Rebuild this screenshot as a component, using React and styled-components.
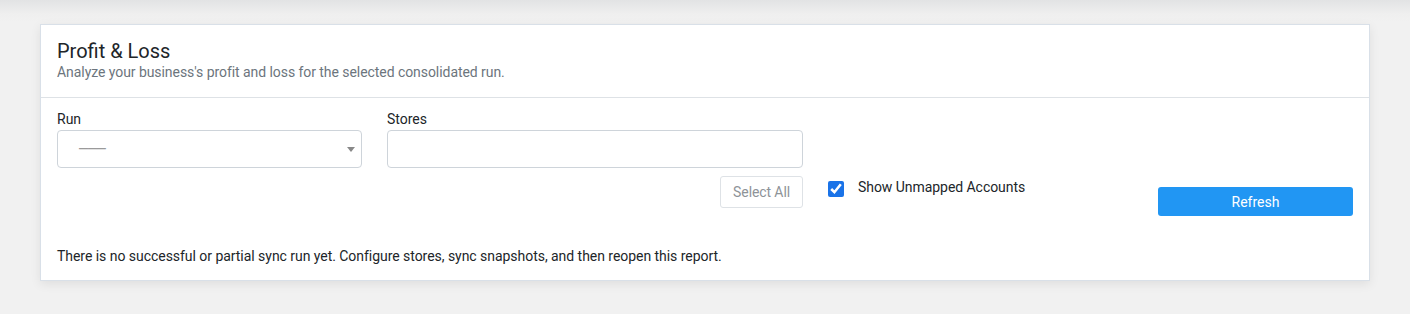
import React, { useState } from "react";
import styled, { createGlobalStyle } from "styled-components";

const COLOR = {
  PAGE: "#f1f1f1",
  TEXT: "#212529",
  MUTED: "#6c757d",
  BORDER: "#ced4da",
  LINE: "#dee2e6",
  BLUE: "#2196f3",
};

const GlobalStyle = createGlobalStyle`
  html, body {
    margin: 0;
    padding: 0;
  }
  body {
    font-family: Roboto, "Liberation Sans", Arial, sans-serif;
    color: ${COLOR.TEXT};
    background: linear-gradient(to bottom, #e2e3e4 0, #efefef 14px, ${COLOR.PAGE} 22px);
    min-height: 314px;
  }
`;

function App() {
  const [showUnmapped, setShowUnmapped] = useState(true);

  return (
    <>
      <GlobalStyle />
      <Page>
        <Card>
          <CardHeader>
            <Title>Profit &amp; Loss</Title>
            <Subtitle>
              Analyze your business's profit and loss for the selected
              consolidated run.
            </Subtitle>
          </CardHeader>
          <CardBody>
            <FilterRow>
              <Field $width={305}>
                <Label>Run</Label>
                <SelectBox>
                  <Placeholder>———</Placeholder>
                  <Caret />
                </SelectBox>
              </Field>
              <Field $width={416}>
                <Label>Stores</Label>
                <MultiInput />
                <Actions>
                  <GhostButton>Select All</GhostButton>
                </Actions>
              </Field>
              <CheckLabel>
                <CheckBox
                  type="checkbox"
                  checked={showUnmapped}
                  onChange={() => setShowUnmapped(!showUnmapped)}
                />
                Show Unmapped Accounts
              </CheckLabel>
              <Spacer />
              <PrimaryButton>Refresh</PrimaryButton>
            </FilterRow>
            <Message>
              There is no successful or partial sync run yet. Configure stores,
              sync snapshots, and then reopen this report.
            </Message>
          </CardBody>
        </Card>
      </Page>
    </>
  );
}

export default App;

const Page = styled.div`
  padding: 24px 40px 30px;
`;

const Card = styled.div`
  background: #fff;
  border: 1px solid #d9e0e8;
  box-shadow: 0 3px 10px rgba(0, 0, 0, 0.08);
`;

const CardHeader = styled.div`
  padding: 15px 16px 15px;
  border-bottom: 1px solid ${COLOR.LINE};
`;

const Title = styled.h1`
  margin: 0;
  font-size: 20px;
  font-weight: 400;
  line-height: 22px;
  color: ${COLOR.TEXT};
`;

const Subtitle = styled.p`
  margin: 0;
  font-size: 14px;
  line-height: 20px;
  letter-spacing: -0.06px;
  color: ${COLOR.MUTED};
`;

const CardBody = styled.div`
  padding: 12px 16px 14px;
`;

const FilterRow = styled.div`
  display: flex;
  align-items: flex-start;
`;

const Field = styled.div`
  width: ${(p) => p.$width}px;
  margin-right: 25px;
  display: flex;
  flex-direction: column;
`;

const Label = styled.label`
  font-size: 14px;
  line-height: 18px;
  margin-bottom: 2px;
  color: ${COLOR.TEXT};
`;

const SelectBox = styled.div`
  position: relative;
  height: 38px;
  box-sizing: border-box;
  border: 1px solid ${COLOR.BORDER};
  border-radius: 4px;
  display: flex;
  align-items: center;
  padding: 0 20px;
`;

const Placeholder = styled.span`
  font-size: 14px;
  color: #9a9a9a;
  letter-spacing: -2px;
`;

const Caret = styled.span`
  position: absolute;
  right: 6px;
  top: 16px;
  width: 0;
  height: 0;
  border-left: 4px solid transparent;
  border-right: 4px solid transparent;
  border-top: 5px solid #888;
`;

const MultiInput = styled.div`
  height: 38px;
  box-sizing: border-box;
  border: 1px solid ${COLOR.BORDER};
  border-radius: 4px;
`;

const Actions = styled.div`
  display: flex;
  justify-content: flex-end;
  margin-top: 8px;
`;

const GhostButton = styled.button`
  height: 32px;
  padding: 0 12px;
  background: #fff;
  border: 1px solid ${COLOR.LINE};
  border-radius: 3px;
  font-family: inherit;
  font-size: 14px;
  letter-spacing: -0.1px;
  color: #8e9398;
  cursor: pointer;
`;

const CheckLabel = styled.label`
  display: flex;
  align-items: center;
  margin-top: 67px;
  font-size: 14px;
  line-height: 20px;
  letter-spacing: -0.05px;
  color: ${COLOR.TEXT};
  cursor: pointer;
`;

const CheckBox = styled.input`
  width: 16px;
  height: 16px;
  margin: 3px 14px 0 0;
  accent-color: #1a73e8;
`;

const Spacer = styled.div`
  flex: 1;
`;

const PrimaryButton = styled.button`
  margin-top: 77px;
  width: 195px;
  height: 29px;
  background: ${COLOR.BLUE};
  border: none;
  border-radius: 3px;
  color: #fff;
  font-family: inherit;
  font-size: 14px;
  cursor: pointer;
`;

const Message = styled.p`
  margin: 30px 0 0;
  font-size: 14px;
  line-height: 20px;
  letter-spacing: -0.04px;
  color: ${COLOR.TEXT};
`;
